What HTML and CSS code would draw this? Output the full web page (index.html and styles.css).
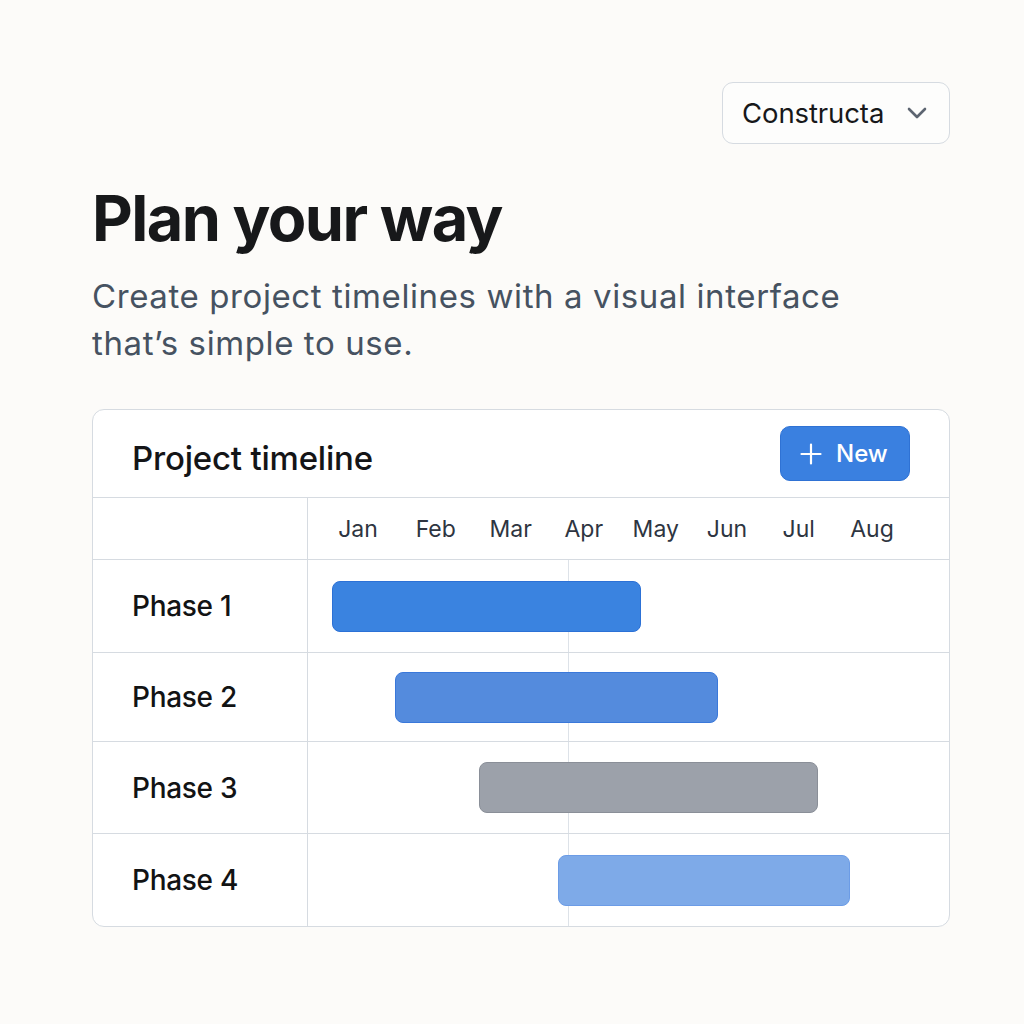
FILE: index.html
```html
<!DOCTYPE html>
<html lang="en">
<head>
<meta charset="utf-8">
<title>Plan your way</title>
<link rel="stylesheet" href="styles.css">
</head>
<body>
<main class="page">
  <div class="topbar">
    <button class="select">
      <span class="select-label">Constructa</span>
      <svg class="chev" width="20" height="12" viewBox="0 0 20 12"><path d="M2 2 L10 10 L18 2" fill="none" stroke="#5d6571" stroke-width="2.6" stroke-linecap="round" stroke-linejoin="round"/></svg>
    </button>
  </div>
  <h1 class="title">Plan your way</h1>
  <p class="subtitle">Create project timelines with a visual interface that’s simple to use.</p>

  <section class="card">
    <header class="card-head">
      <h2 class="card-title">Project timeline</h2>
      <button class="btn-new">
        <svg width="22" height="22" viewBox="0 0 22 22"><path d="M11 1.5 V20.5 M1.5 11 H20.5" stroke="#fff" stroke-width="2.2" stroke-linecap="round"/></svg>
        <span>New</span>
      </button>
    </header>
    <div class="grid">
      <div class="label-cell head"></div>
      <div class="months">
        <span>Jan</span><span>Feb</span><span>Mar</span><span>Apr</span><span>May</span><span>Jun</span><span>Jul</span><span>Aug</span>
      </div>

      <div class="label-cell">Phase 1</div>
      <div class="track"><div class="bar bar-1" style="margin-left:24px;width:309px"></div></div>

      <div class="label-cell">Phase 2</div>
      <div class="track"><div class="bar bar-2" style="margin-left:87px;width:323px"></div></div>

      <div class="label-cell">Phase 3</div>
      <div class="track"><div class="bar bar-3" style="margin-left:171px;width:339px"></div></div>

      <div class="label-cell">Phase 4</div>
      <div class="track"><div class="bar bar-4" style="margin-left:250px;width:292px"></div></div>
    </div>
  </section>
</main>
</body>
</html>
```

FILE: styles.css
```css
* { box-sizing: border-box; }
html, body { margin: 0; padding: 0; }
body {
  background: #fcfbf9;
  font-family: Inter, "Noto Sans", "Liberation Sans", sans-serif;
  color: #17181a;
}
.page {
  padding: 82px 74px 0 92px;
  width: 1024px;
}
.topbar {
  display: flex;
  justify-content: flex-end;
}
.select {
  display: flex;
  align-items: center;
  justify-content: space-between;
  width: 228px;
  height: 62px;
  padding: 0 22px 0 19px;
  background: #fdfdfc;
  border: 1px solid #d6dbe1;
  border-radius: 11px;
  font-family: inherit;
  font-size: 27.5px;
  color: #17181a;
}
.select-label { letter-spacing: -0.1px; }
.chev { display: block; }

.title {
  margin: 36px 0 0;
  font-size: 63px;
  line-height: 76px;
  font-weight: 700;
  letter-spacing: -1.6px;
  color: #17181a;
}
.subtitle {
  margin: 17px 0 0;
  max-width: 780px;
  font-size: 33px;
  line-height: 47px;
  font-weight: 400;
  color: #465261;
  letter-spacing: 0.6px;
}

.card {
  margin-top: 42px;
  background: #fff;
  border: 1px solid #d6dbe1;
  border-radius: 12px;
  overflow: hidden;
}
.card-head {
  display: flex;
  align-items: center;
  justify-content: space-between;
  height: 88px;
  padding: 0 39px 0 39px;
  border-bottom: 1px solid #d6dbe1;
}
.card-title {
  margin: 8px 0 0;
  font-size: 33px;
  font-weight: 500;
  letter-spacing: -0.2px;
  color: #141517;
}
.btn-new {
  display: flex;
  align-items: center;
  gap: 14px;
  width: 130px;
  height: 55px;
  padding: 0 0 0 19px;
  background: #3a80e0;
  border: 1px solid #2f72d4;
  border-radius: 10px;
  color: #fff;
  font-family: inherit;
  font-size: 24px;
  font-weight: 500;
}

.grid {
  display: grid;
  grid-template-columns: 215px 1fr;
  grid-template-rows: 62px 93px 89px 92px 92px;
}
.label-cell {
  display: flex;
  align-items: center;
  padding-left: 39px;
  font-size: 28px;
  font-weight: 500;
  color: #121314;
  border-right: 1px solid #d6dbe1;
  border-bottom: 1px solid #d6dbe1;
  letter-spacing: -0.3px;
}
.grid > :nth-last-child(2),
.grid > :last-child { border-bottom: none; }
.months {
  display: grid;
  grid-template-columns: 79px 76.5px 73.5px 72.5px 71.5px 71px 72.5px 74px;
  align-items: center;
  padding-left: 10.5px;
  border-bottom: 1px solid #d6dbe1;
  font-size: 23px;
  color: #2e3541;
}
.months span { text-align: center; }
.track {
  display: flex;
  align-items: center;
  border-bottom: 1px solid #d6dbe1;
  background: linear-gradient(#dde2e8, #dde2e8) no-repeat 260px 0 / 1px 100%;
}
.bar {
  height: 51px;
  border-radius: 8px;
  border: 1px solid transparent;
}
.bar-1 { background: #3a83e0; border-color: #2c71d6; }
.bar-2 { background: #548bdd; border-color: #3a78da; }
.bar-3 { background: #9ca1aa; border-color: #8a8f98; }
.bar-4 { background: #7eaae8; border-color: #6c9ce6; }
```
